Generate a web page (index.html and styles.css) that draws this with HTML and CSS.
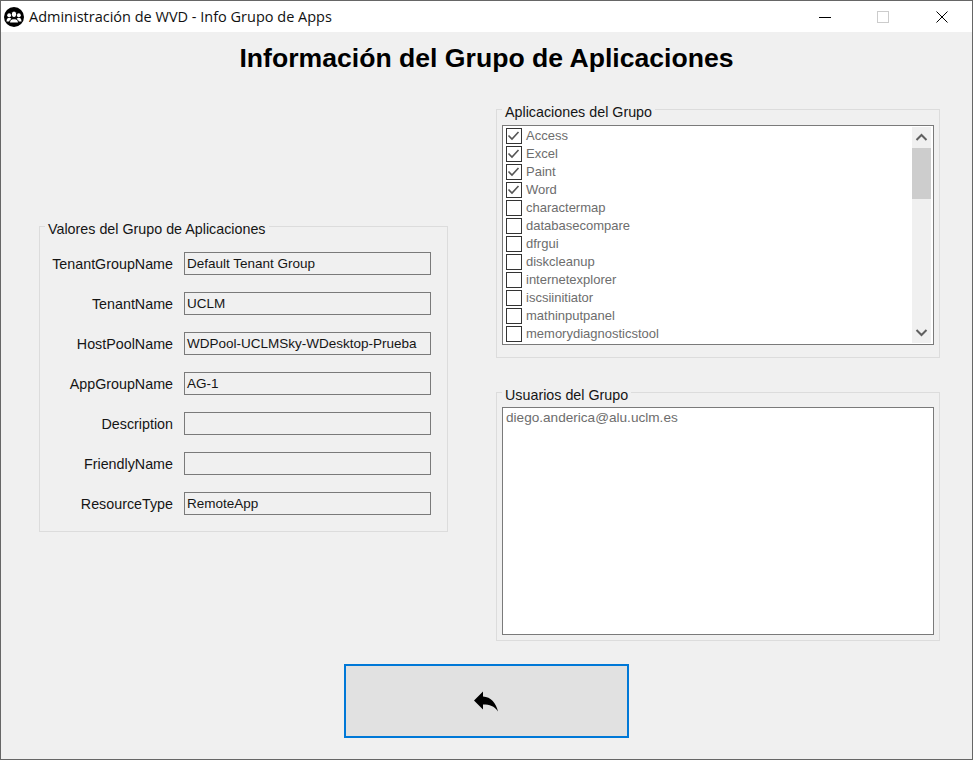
FILE: index.html
```html
<!DOCTYPE html>
<html>
<head>
<meta charset="utf-8">
<link rel="stylesheet" href="styles.css">
<title>Info Grupo de Apps</title>
</head>
<body>
<div class="window">
  <div class="titlebar">
    <svg class="app-icon" width="20" height="20" viewBox="0 0 20 20">
      <circle cx="10" cy="10" r="10" fill="#000"/>
      <circle cx="5.200" cy="8.200" r="2" fill="#fff"/>
      <circle cx="14.800" cy="8.200" r="2" fill="#fff"/>
      <path d="M2.500 14.500c0-3 1.200-3.800 2.700-3.800s2.700.8 2.700 3.800z" fill="#fff"/>
      <path d="M12.100 14.500c0-3 1.200-3.800 2.700-3.800s2.700.8 2.700 3.800z" fill="#fff"/>
      <ellipse cx="10" cy="7.300" rx="2.700" ry="3.300" fill="#fff" stroke="#000"/>
      <path d="M5.500 16c0-3.200 1.800-4.300 4.500-4.300s4.500 1.100 4.500 4.300z" fill="#fff" stroke="#000"/>
    </svg>
    <span class="window-title">Administración de WVD - Info Grupo de Apps</span>
    <div class="controls">
      <span class="control"><svg width="14" height="14" viewBox="0 0 14 14"><path d="M1 7.500h12" stroke="#000" fill="none"/></svg></span>
      <span class="control"><svg width="14" height="14" viewBox="0 0 14 14"><rect x="1.500" y="1.500" width="11" height="11" stroke="#ccc" fill="none"/></svg></span>
      <span class="control"><svg width="14" height="14" viewBox="0 0 14 14"><path d="M1.500 1.500l11 11M12.500 1.500l-11 11" stroke="#000" fill="none"/></svg></span>
    </div>
  </div>

  <h1>Información del Grupo de Aplicaciones</h1>

  <div class="panels">
    <div class="group values">
      <div class="group-title">Valores del Grupo de Aplicaciones</div>
      <div class="fields">
        <label>TenantGroupName</label><div class="field">Default Tenant Group</div>
        <label>TenantName</label><div class="field">UCLM</div>
        <label>HostPoolName</label><div class="field">WDPool-UCLMSky-WDesktop-Prueba</div>
        <label>AppGroupName</label><div class="field">AG-1</div>
        <label>Description</label><div class="field"></div>
        <label>FriendlyName</label><div class="field"></div>
        <label>ResourceType</label><div class="field">RemoteApp</div>
      </div>
    </div>

    <div class="side">
      <div class="group">
        <div class="group-title">Aplicaciones del Grupo</div>
        <div class="listbox">
          <ul class="apps">
            <li><span class="check"><svg width="14" height="14" viewBox="0 0 14 14"><path d="M1.500 6.500l3.500 3.500 6.500-7" stroke="#555" stroke-width="1.600" fill="none"/></svg></span>Access</li>
            <li><span class="check"><svg width="14" height="14" viewBox="0 0 14 14"><path d="M1.500 6.500l3.500 3.500 6.500-7" stroke="#555" stroke-width="1.600" fill="none"/></svg></span>Excel</li>
            <li><span class="check"><svg width="14" height="14" viewBox="0 0 14 14"><path d="M1.500 6.500l3.500 3.500 6.500-7" stroke="#555" stroke-width="1.600" fill="none"/></svg></span>Paint</li>
            <li><span class="check"><svg width="14" height="14" viewBox="0 0 14 14"><path d="M1.500 6.500l3.500 3.500 6.500-7" stroke="#555" stroke-width="1.600" fill="none"/></svg></span>Word</li>
            <li><span class="check"></span>charactermap</li>
            <li><span class="check"></span>databasecompare</li>
            <li><span class="check"></span>dfrgui</li>
            <li><span class="check"></span>diskcleanup</li>
            <li><span class="check"></span>internetexplorer</li>
            <li><span class="check"></span>iscsiinitiator</li>
            <li><span class="check"></span>mathinputpanel</li>
            <li><span class="check"></span>memorydiagnosticstool</li>
          </ul>
          <div class="scrollbar">
            <svg class="arrow" width="19" height="21" viewBox="0 0 19 21"><path d="M4.500 13l5-5 5 5" stroke="#606060" stroke-width="2" fill="none"/></svg>
            <div class="thumb"></div>
            <svg class="arrow arrow-down" width="19" height="21" viewBox="0 0 19 21"><path d="M4.500 8l5 5 5-5" stroke="#606060" stroke-width="2" fill="none"/></svg>
          </div>
        </div>
      </div>

      <div class="group">
        <div class="group-title">Usuarios del Grupo</div>
        <div class="users">diego.anderica@alu.uclm.es</div>
      </div>
    </div>
  </div>

  <div class="actions">
    <button class="back">
      <svg width="27" height="22" viewBox="0 0 27 22"><path d="M1 10.500L10 1.500V6.500C18 7 23 13 25 21.500C21 16 17 14.500 10 14.500V19.500Z" fill="#000"/></svg>
    </button>
  </div>
</div>
</body>
</html>
```
FILE: styles.css
```css
* {
	box-sizing: border-box;
}
body {
	margin: 0;
	font-family: "Liberation Sans", Arial, sans-serif;
	font-size: 14px;
	color: #151515;
}
.window {
	display: flex;
	flex-direction: column;
	width: 973px;
	height: 760px;
	background-color: #f0f0f0;
	border: 1px solid #666;
	overflow: hidden;
}
.titlebar {
	display: flex;
	align-items: center;
	flex: none;
	height: 31px;
	padding-left: 3px;
	background-color: white;
}
.app-icon {
	margin-right: 5px;
}
.window-title {
	font-family: "Open Sans", sans-serif;
	font-size: 14.5px;
	color: #111;
}
.controls {
	display: flex;
	margin-left: auto;
	margin-right: 1px;
}
.control {
	display: flex;
	align-items: center;
	justify-content: center;
	width: 58px;
	height: 31px;
}
.control:last-child {
	width: 59px;
}
h1 {
	flex: none;
	height: 77px;
	margin: 0;
	padding-top: 11px;
	font-size: 26.6px;
	line-height: 30px;
	font-weight: bold;
	text-align: center;
	color: #000;
}
.panels {
	display: flex;
	align-items: flex-start;
	padding-left: 38px;
}
.group {
	border: 1px solid #dcdcdc;
	width: 444px;
	height: 249px;
}
.group-title {
	width: fit-content;
	margin: -6px 0 0 5px;
	padding: 0 3px;
	height: 16px;
	font-size: 14.3px;
	line-height: 16px;
	background-color: #f0f0f0;
}
.values {
	width: 409px;
	height: 306px;
	margin-top: 117px;
	margin-right: 48px;
}
.fields {
	display: grid;
	grid-template-columns: 133px 247px;
	grid-auto-rows: 23px;
	column-gap: 11px;
	row-gap: 17px;
	margin-top: 15px;
}
label {
	font-size: 14.3px;
	text-align: right;
	line-height: 25px;
}
.field {
	border: 1px solid #7a7a7a;
	padding-left: 2px;
	font-size: 13.5px;
	line-height: 22px;
	white-space: nowrap;
	overflow: hidden;
}
.side {
	display: flex;
	flex-direction: column;
	gap: 34px;
}
.listbox {
	display: flex;
	justify-content: space-between;
	width: 432px;
	height: 220px;
	margin: 5px 0 0 5px;
	background-color: white;
	border: 1px solid #7a7a7a;
}
.apps {
	list-style: none;
	margin: 0;
	padding: 1px 0 0 3px;
}
.apps li {
	display: flex;
	align-items: flex-start;
	gap: 4px;
	height: 18px;
	font-size: 13px;
	line-height: 17px;
	color: #6d6d6d;
}
.check {
	flex: none;
	width: 16px;
	height: 16px;
	margin-top: 1px;
	border: 1px solid #333;
	background-color: white;
}
.check svg {
	display: block;
}
.scrollbar {
	display: flex;
	flex-direction: column;
	flex: none;
	width: 19px;
	height: 216px;
	margin: 1px 2px 0 0;
	background-color: #f0f0f0;
}
.arrow {
	display: block;
	flex: none;
}
.arrow-down {
	margin-top: auto;
}
.thumb {
	height: 51px;
	background-color: #cdcdcd;
}
.users {
	width: 432px;
	height: 228px;
	margin: 4px 0 0 5px;
	padding: 2px 3px;
	font-size: 13.6px;
	line-height: 16px;
	background-color: white;
	border: 1px solid #7a7a7a;
	color: #6d6d6d;
}
.actions {
	display: flex;
	justify-content: center;
	margin-top: 23px;
}
.back {
	display: flex;
	align-items: center;
	justify-content: center;
	width: 285px;
	height: 74px;
	padding: 0;
	background-color: #e1e1e1;
	border: 2px solid #0078d7;
}
```
